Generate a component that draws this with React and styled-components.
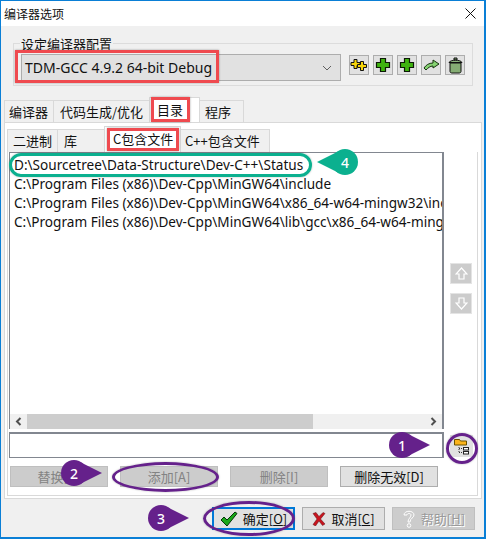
import React from 'react'
import styled, { createGlobalStyle } from 'styled-components'

const GlobalStyle = createGlobalStyle`
  html, body { margin: 0; padding: 0; background: #f0f0f0; }
  * { box-sizing: border-box; }
`
const FONT = `"Noto Sans CJK SC", "Liberation Sans", sans-serif`

const Win = styled.div`
  position: relative;
  width: 486px;
  height: 539px;
  display: flex;
  flex-direction: column;
  border: 1px solid #0a7fd6;
  border-width: 1px 2px 2px 1px;
  background: #f0f0f0;
  font-family: "Noto Sans", ${FONT};
  font-size: 13px;
  color: #111;
  overflow: hidden;
`
const TitleBar = styled.div`
  height: 25px;
  flex: none;
  background: #fff;
  display: flex;
  align-items: center;
  justify-content: space-between;
  padding: 0 8px 0 3px;
  font-size: 12px;
  font-family: ${FONT};
`
const Content = styled.div`
  flex: 1;
  display: flex;
  flex-direction: column;
  padding: 0 2px 0 3px;
`
const GroupBox = styled.div`
  position: relative;
  margin: 17px 9px 0 9px;
  height: 43px;
  border: 1px solid #dcdcdc;
  display: flex;
  gap: 8px;
  padding: 10px 7px 0 7px;
`
const GroupLabel = styled.span`
  position: absolute;
  left: 6px;
  top: -8px;
  background: #f0f0f0;
  padding: 0 1px;
  font-family: ${FONT};
  font-size: 13px;
  line-height: 16px;
`
const Combo = styled.div`
  width: 321px;
  height: 27px;
  background: #e1e1e1;
  border: 1px solid #adadad;
  display: flex;
  align-items: center;
  justify-content: space-between;
  padding: 0 8px 0 3px;
  font-family: "Noto Sans", sans-serif;
  font-size: 14px;
`
const IconRow = styled.div`
  display: flex;
  gap: 4px;
  padding-top: 1px;
`
const IconBtn = styled.div`
  width: 20px;
  height: 20px;
  background: #e1e1e1;
  border: 1px solid #adadad;
  display: flex;
  align-items: center;
  justify-content: center;
`
const Tabs = styled.div`
  display: flex;
  align-items: flex-end;
  height: ${p => p.$height}px;
  margin-top: ${p => p.$top}px;
  padding-left: ${p => p.$left}px;
  flex: none;
`
const Tab = styled.div`
  width: ${p => p.$w}px;
  height: ${p => (p.$active ? p.$h + 3 : p.$h)}px;
  background: ${p => (p.$active ? '#fff' : '#f0f0f0')};
  border: 1px solid #d9d9d9;
  border-bottom: none;
  margin-left: -1px;
  padding-left: ${p => p.$pad}px;
  padding-bottom: ${p => (p.$active ? 2 : 1)}px;
  display: flex;
  align-items: center;
  font-family: ${FONT};
  font-size: 13px;
  white-space: nowrap;
`
const Page = styled.div`
  flex: none;
  height: 377px;
  background: #fff;
  border: 1px solid #d9d9d9;
  padding: 1px 3px 0 1px;
`
const InnerPage = styled.div`
  height: 344px;
  border: 1px solid #d9d9d9;
  border-top: none;
  padding: 0 0 0 1px;
  margin: 0 0 0 1px;
  display: grid;
  grid-template-columns: 435px 1fr;
  grid-template-rows: 277px 29px 1fr;
`
const ListBox = styled.div`
  border: 1px solid #828790;
  border-width: 1px 2px 0 1px;
  display: flex;
  flex-direction: column;
  min-width: 0;
`
const Rows = styled.div`
  flex: 1;
  overflow: hidden;
  padding-top: 2px;
`
const PathRow = styled.div`
  height: 19px;
  line-height: 19px;
  padding-left: 4px;
  white-space: nowrap;
  overflow: hidden;
  font-family: "Noto Sans", sans-serif;
  font-size: 13.6px;
`
const ScrollBar = styled.div`
  height: 15px;
  flex: none;
  background: #f0f0f0;
  display: flex;
  align-items: center;
  justify-content: space-between;
`
const ScrollArrow = styled.div`
  width: 17px;
  height: 15px;
  display: flex;
  align-items: center;
  justify-content: center;
  flex: none;
`
const ScrollThumb = styled.div`
  flex: 1;
  height: 15px;
  margin-right: 112px;
  background: #cdcdcd;
`
const SideCol = styled.div`
  display: flex;
  flex-direction: column;
  align-items: center;
  padding: 111px 0 0 1px;
  gap: 9px;
`
const SideBtn = styled.div`
  width: 22px;
  height: 21px;
  background: #ccc;
  border: 1px solid #e4e4e4;
  display: flex;
  align-items: center;
  justify-content: center;
`
const InputBox = styled.div`
  margin-top: 3px;
  border: 1px solid #828790;
  border-width: 2px 2px 1px 1px;
  background: #fff;
`
const BrowseCell = styled.div`
  display: flex;
  padding: 6px 0 0 6px;
`
const BrowseBtn = styled.div`
  width: 23px;
  height: 22px;
  background: #e1e1e1;
  display: flex;
  align-items: center;
  justify-content: center;
`
const ActionRow = styled.div`
  grid-column: 1 / 3;
  display: flex;
  gap: 12px;
  padding: 8px 0 0 1px;
`
const ActionBtn = styled.div`
  width: 98px;
  height: 21px;
  background: ${p => (p.$disabled ? '#ccc' : '#e1e1e1')};
  border: 1px solid ${p => (p.$disabled ? '#bfbfbf' : '#adadad')};
  color: ${p => (p.$disabled ? '#838383' : '#111')};
  display: flex;
  align-items: center;
  justify-content: center;
  font-family: ${FONT};
  font-size: 13px;
`
const Footer = styled.div`
  display: flex;
  justify-content: flex-end;
  gap: 7px;
  padding: 8px 7px 0 0;
`
const FootBtn = styled.div`
  width: 83px;
  height: 23px;
  background: ${p => (p.$disabled ? '#ccc' : '#e1e1e1')};
  border: ${p => (p.$primary ? '2px solid #0078d7' : `1px solid ${p.$disabled ? '#bfbfbf' : '#adadad'}`)};
  color: ${p => (p.$disabled ? '#9a9a9a' : '#111')};
  text-shadow: ${p => (p.$disabled ? '1px 1px 0 #fff' : 'none')};
  display: flex;
  align-items: center;
  justify-content: center;
  gap: 5px;
  font-family: ${FONT};
  font-size: 13px;
  u { text-underline-offset: 1px; }
`
// red boxes and callouts drawn over the dialog
const RedBox = styled.div`
  position: absolute;
  left: ${p => p.$x}px;
  top: ${p => p.$y}px;
  width: ${p => p.$w}px;
  height: ${p => p.$h}px;
  border: 3px solid #ef4a4f;
  box-shadow: 0 0 2px rgba(0, 0, 0, 0.35);
`
const Ring = styled.div`
  position: absolute;
  left: ${p => p.$x}px;
  top: ${p => p.$y}px;
  width: ${p => p.$w}px;
  height: ${p => p.$h}px;
  border: 3px solid ${p => p.$color};
  border-radius: ${p => (p.$pill ? '14px' : '50%')};
  box-shadow: 0 0 2px rgba(0, 0, 0, 0.3);
`
const Badge = styled.div`
  position: absolute;
  left: ${p => p.$x}px;
  top: ${p => p.$y}px;
  width: 26px;
  height: 26px;
  border-radius: 50%;
  background: ${p => p.$color};
  color: #fff;
  font-family: "Noto Sans", sans-serif;
  font-size: 14px;
  font-weight: 500;
  display: flex;
  align-items: center;
  justify-content: center;
  &::after {
    content: '';
    position: absolute;
    top: 1.5px;
    ${p => (p.$left ? 'right: 19px;' : 'left: 19px;')}
    border-top: 11.5px solid transparent;
    border-bottom: 11.5px solid transparent;
    ${p => (p.$left ? `border-right: 22px solid ${p.$color};` : `border-left: 22px solid ${p.$color};`)}
  }
`

const PURPLE = '#65218b'
const TEAL = '#0bb08f'

const plusPath = (cx, cy, r, t) => {
  const a = r - t
  return `M${cx - t} ${cy - r}h${2 * t}v${a}h${a}v${2 * t}h${-a}v${a}h${-2 * t}v${-a}h${-a}v${-2 * t}h${a}z`
}
const PlusIcon = () => (
  <svg width="16" height="16" viewBox="0 0 16 16">
    <path d={plusPath(8, 8, 6.5, 2.5)} fill="#3fb30f" stroke="#0c1a06" strokeWidth="1.2" />
  </svg>
)
const DoublePlusIcon = () => (
  <svg width="18" height="14" viewBox="0 0 18 14">
    <path d={plusPath(5.5, 6, 4.5, 1.5)} fill="#f6d50a" stroke="#111" />
    <path d={plusPath(12, 8, 4.5, 1.5)} fill="#f6d50a" stroke="#111" />
  </svg>
)
const ArrowIcon = () => (
  <svg width="17" height="14" viewBox="0 0 17 14">
    <path d="M1 10c2-3 5-5 9-5V2l6 4-6 4V8c-3 0-5 2-7 4z" fill="#86d272" stroke="#16320f" />
  </svg>
)
const TrashIcon = () => (
  <svg width="15" height="17" viewBox="0 0 15 17">
    <path d="M6 1h3v2H6z" fill="#7ea86f" stroke="#111" />
    <path d="M1 5.500c1-3 12-3 13 0z" fill="#8cb47c" stroke="#111" />
    <path d="M2 6h11v8.500c0 1-1 1.500-2 1.500H4c-1 0-2-.5-2-1.500z" fill="#85ad74" stroke="#111" />
  </svg>
)
const ChevronDown = () => (
  <svg width="10" height="6" viewBox="0 0 10 6"><path d="M1 1l4 4 4-4" fill="none" stroke="#606060" /></svg>
)
const CloseIcon = () => (
  <svg width="11" height="11" viewBox="0 0 11 11"><path d="M.5.5l10 10M10.500.5l-10 10" stroke="#111" fill="none" /></svg>
)
const ScrollChevron = ({ right }) => (
  <svg width="7" height="9" viewBox="0 0 7 9">
    <path d={right ? 'M1.500 1L5 4.500 1.500 8' : 'M5.500 1L2 4.500 5.500 8'} fill="none" stroke="#505050" strokeWidth="2" />
  </svg>
)
const SideArrow = ({ down }) => (
  <svg width="13" height="13" viewBox="0 0 13 13">
    <path
      d={down ? 'M4 1h5v5h3l-5.500 6L1 6h3z' : 'M4 12h5V7h3L6.500 1 1 7h3z'}
      fill="#ccc"
      stroke="#fff"
      strokeWidth="1.200"
    />
  </svg>
)
const FolderTreeIcon = () => (
  <svg width="16" height="17" viewBox="0 0 16 17">
    <path d="M.5 1.500h5l1 1.500h6v4H.5z" fill="#fbb41b" stroke="#6b5200" />
    <path d="M5 9v6M5 10.500h3M5 14.500h3" stroke="#333" strokeDasharray="1 1" fill="none" />
    <rect x="9.500" y="9.500" width="5" height="2.500" fill="#fff" stroke="#222" />
    <rect x="9.500" y="13.500" width="5" height="2.500" fill="#fff" stroke="#222" />
  </svg>
)
const CheckIcon = () => (
  <svg width="18" height="16" viewBox="0 0 18 16">
    <path d="M1 9l3-3 3 3 8-8 2 1.500L7 15z" fill="#1aa81a" stroke="#05350a" />
  </svg>
)
const CrossIcon = () => (
  <svg width="14" height="14" viewBox="0 0 14 14">
    <path d="M1 1.500L4 .5l3 4 4-4 2 1L8.500 7 13 12l-2.500 1.500L7 9l-3.500 5L1 12.500 5 7z" fill="#c8141e" stroke="#5d1014" strokeWidth=".5" />
  </svg>
)
const HelpIcon = () => (
  <svg width="14" height="18" viewBox="0 0 14 18">
    <path d="M2 5c0-5 10-5 10 0 0 3-4 3-4 7H6c0-4 3-4 3-7 0-2-4-2-4 0z" fill="#ccc" stroke="#fff" />
    <circle cx="7" cy="15.500" r="1.800" fill="#ccc" stroke="#fff" />
  </svg>
)

const PATHS = [
  'D:\\Sourcetree\\Data-Structure\\Dev-C++\\Status',
  'C:\\Program Files (x86)\\Dev-Cpp\\MinGW64\\include',
  'C:\\Program Files (x86)\\Dev-Cpp\\MinGW64\\x86_64-w64-mingw32\\include',
  'C:\\Program Files (x86)\\Dev-Cpp\\MinGW64\\lib\\gcc\\x86_64-w64-mingw32\\4.9.2\\include',
]

export default function App() {
  return (
    <Win>
      <GlobalStyle />
      <TitleBar>编译器选项<CloseIcon /></TitleBar>
      <Content>
        <GroupBox>
          <GroupLabel>设定编译器配置</GroupLabel>
          <Combo>TDM-GCC 4.9.2 64-bit Debug<ChevronDown /></Combo>
          <IconRow>
            <IconBtn><DoublePlusIcon /></IconBtn>
            <IconBtn><PlusIcon /></IconBtn>
            <IconBtn><PlusIcon /></IconBtn>
            <IconBtn><ArrowIcon /></IconBtn>
            <IconBtn><TrashIcon /></IconBtn>
          </IconRow>
        </GroupBox>
        <Tabs $height={25} $top={11} $left={1}>
          <Tab $w={50} $h={22} $pad={4}>编译器</Tab>
          <Tab $w={97} $h={22} $pad={6}>代码生成/优化</Tab>
          <Tab $w={51} $h={22} $pad={7} $active>目录</Tab>
          <Tab $w={45} $h={22} $pad={5}>程序</Tab>
        </Tabs>
        <Page>
          <Tabs $height={26} $top={2} $left={2}>
            <Tab $w={51} $h={23} $pad={5}>二进制</Tab>
            <Tab $w={48} $h={23} $pad={6}>库</Tab>
            <Tab $w={77} $h={23} $pad={8} $active>C包含文件</Tab>
            <Tab $w={90} $h={23} $pad={4}>C++包含文件</Tab>
          </Tabs>
          <InnerPage>
            <ListBox>
              <Rows>
                {PATHS.map(p => <PathRow key={p}>{p}</PathRow>)}
              </Rows>
              <ScrollBar>
                <ScrollArrow><ScrollChevron /></ScrollArrow>
                <ScrollThumb />
                <ScrollArrow><ScrollChevron right /></ScrollArrow>
              </ScrollBar>
            </ListBox>
            <SideCol>
              <SideBtn><SideArrow /></SideBtn>
              <SideBtn><SideArrow down /></SideBtn>
            </SideCol>
            <InputBox />
            <BrowseCell><BrowseBtn><FolderTreeIcon /></BrowseBtn></BrowseCell>
            <ActionRow>
              <ActionBtn $disabled>替换[R]</ActionBtn>
              <ActionBtn $disabled>添加[A]</ActionBtn>
              <ActionBtn $disabled>删除[I]</ActionBtn>
              <ActionBtn>删除无效[D]</ActionBtn>
            </ActionRow>
          </InnerPage>
        </Page>
        <Footer>
          <FootBtn $primary><CheckIcon /><span>确定[<u>O</u>]</span></FootBtn>
          <FootBtn><CrossIcon /><span>取消[<u>C</u>]</span></FootBtn>
          <FootBtn $disabled><HelpIcon /><span>帮助[<u>H</u>]</span></FootBtn>
        </Footer>
      </Content>

      <RedBox $x={14} $y={49} $w={204} $h={33} />
      <RedBox $x={150} $y={96} $w={39} $h={25} />
      <RedBox $x={106} $y={127} $w={72} $h={23} />
      <Ring $x={8} $y={152} $w={303} $h={24} $color={TEAL} $pill />
      <Ring $x={445} $y={432} $w={32} $h={31} $color={PURPLE} />
      <Ring $x={111} $y={461} $w={107} $h={30} $color={PURPLE} />
      <Ring $x={202} $y={500} $w={92} $h={35} $color={PURPLE} />
      <Badge $x={331} $y={148} $color={TEAL} $left>4</Badge>
      <Badge $x={388} $y={431} $color={PURPLE}>1</Badge>
      <Badge $x={60} $y={459} $color={PURPLE}>2</Badge>
      <Badge $x={147} $y={504} $color={PURPLE}>3</Badge>
    </Win>
  )
}
